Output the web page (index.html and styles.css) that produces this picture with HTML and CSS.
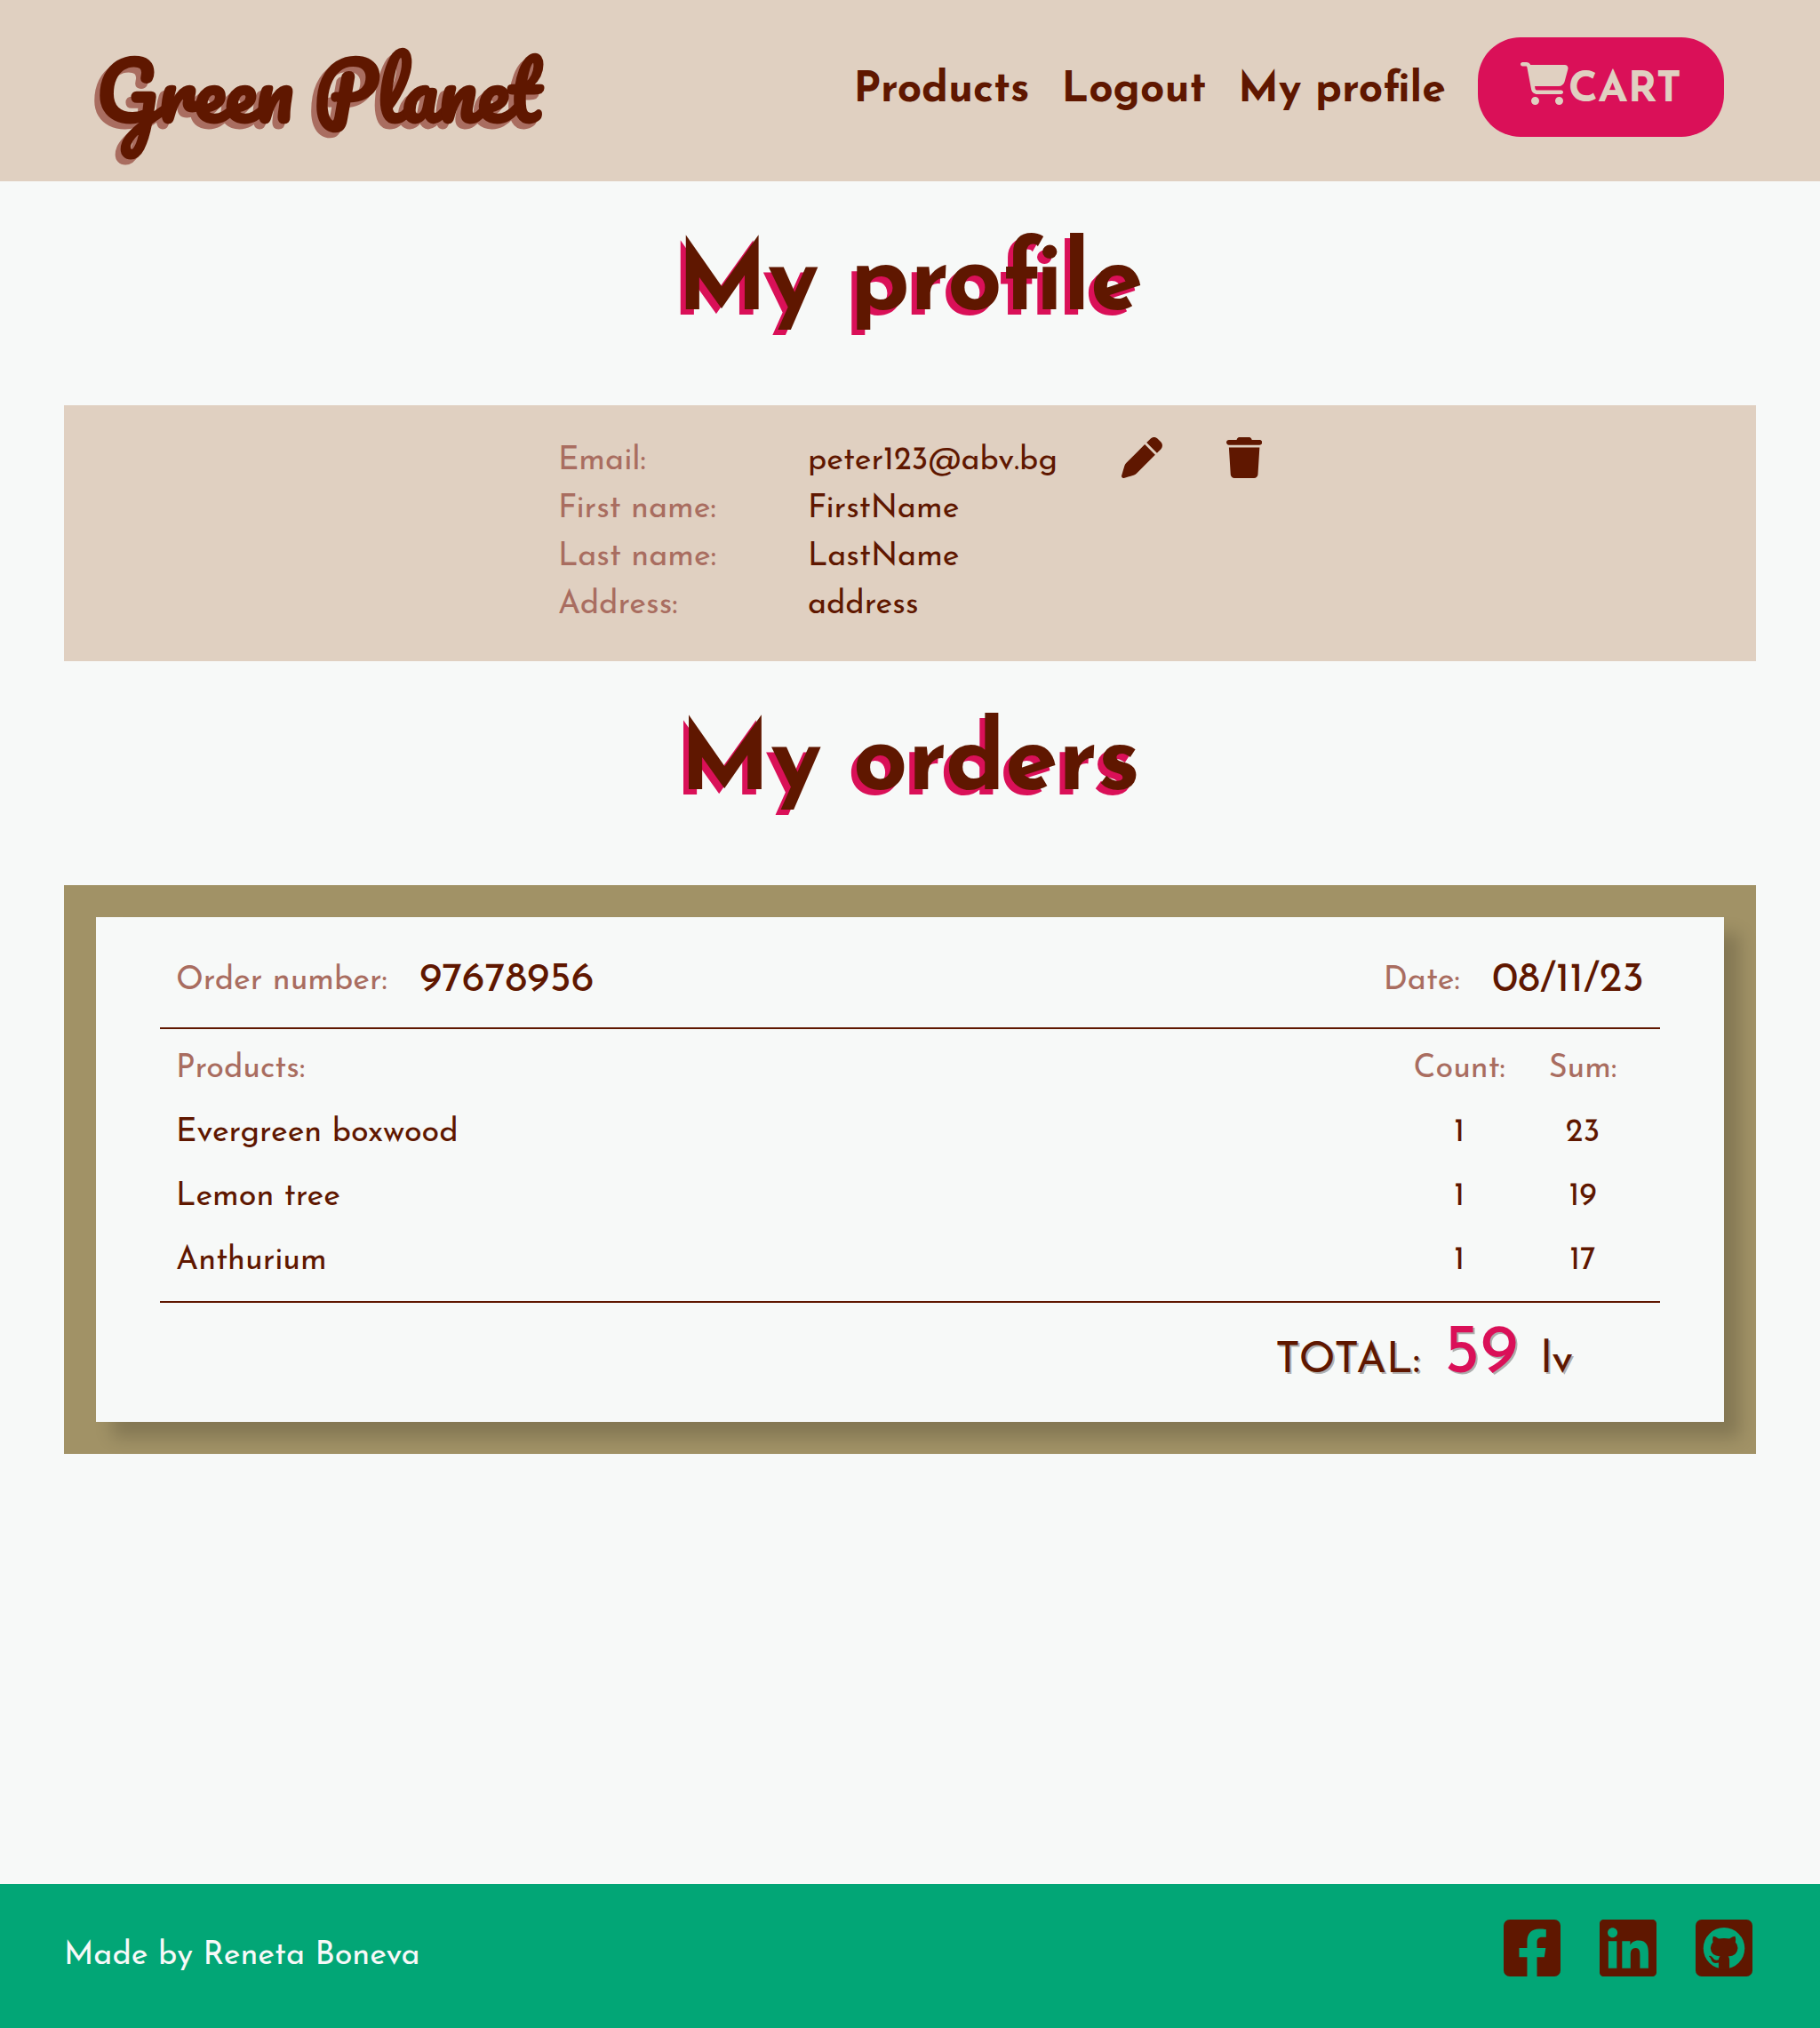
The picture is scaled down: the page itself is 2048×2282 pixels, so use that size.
FILE: index.html
```html
<!DOCTYPE html>
<html lang="en">
<head>
  <meta charset="utf-8">
  <meta name="viewport" content="width=device-width, initial-scale=1">
  <title>Green Planet</title>
  <link rel="stylesheet" href="styles.css">
</head>
<body>
  <header class="site-header">
    <a class="logo" href="#">Green Planet</a>
    <nav class="nav">
      <a class="nav-link" href="#">Products</a>
      <a class="nav-link" href="#">Logout</a>
      <a class="nav-link" href="#">My profile</a>
      <button class="cart" type="button">
        <svg class="cart-icon" viewBox="0 0 576 512" aria-hidden="true"><path d="M0 24C0 10.700 10.700 0 24 0H69.500c22 0 41.500 12.800 50.600 32h411c26.300 0 45.500 25 38.600 50.400l-41 152.300c-8.500 31.400-37 53.300-69.500 53.300H170.700l5.400 28.500c2.200 11.300 12.100 19.500 23.600 19.500H488c13.300 0 24 10.700 24 24s-10.700 24-24 24H199.700c-34.600 0-64.300-24.600-70.700-58.500L77.400 54.500c-.7-3.800-4-6.500-7.900-6.500H24C10.700 48 0 37.300 0 24zM128 464a48 48 0 1 1 96 0 48 48 0 1 1 -96 0zm336-48a48 48 0 1 1 0 96 48 48 0 1 1 0-96z"/></svg>
        <span class="cart-text">CART</span>
      </button>
    </nav>
  </header>

  <main class="main">
    <h1 class="title">My profile</h1>
    <section class="profile">
      <dl class="details">
        <dt>Email:</dt><dd>peter123@abv.bg</dd>
        <dt>First name:</dt><dd>FirstName</dd>
        <dt>Last name:</dt><dd>LastName</dd>
        <dt>Address:</dt><dd>address</dd>
      </dl>
      <div class="actions">
        <button class="icon-button" type="button" aria-label="Edit profile">
          <svg class="action-icon" viewBox="0 0 512 512" aria-hidden="true"><path d="M362.700 19.300L314.300 67.700 444.300 197.700l48.400-48.400c25-25 25-65.500 0-90.500L453.300 19.300c-25-25-65.500-25-90.500 0zm-71 71L58.600 323.500c-10.400 10.400-18 23.300-22.200 37.400L1 481.200C-1.500 489.700 .8 498.800 7 505s15.300 8.500 23.700 6.100l120.300-35.400c14.100-4.200 27-11.800 37.400-22.200L421.700 220.300 291.700 90.300z"/></svg>
        </button>
        <button class="icon-button" type="button" aria-label="Delete profile">
          <svg class="action-icon" viewBox="0 0 448 512" aria-hidden="true"><path d="M135.200 17.700L128 32H32C14.300 32 0 46.300 0 64S14.300 96 32 96H416c17.700 0 32-14.300 32-32s-14.300-32-32-32H320l-7.200-14.300C307.400 6.800 296.300 0 284.200 0H163.800c-12.100 0-23.200 6.800-28.600 17.700zM416 128H32L53.200 467c1.600 25.300 22.600 45 47.900 45H346.900c25.300 0 46.300-19.700 47.900-45L416 128z"/></svg>
        </button>
      </div>
    </section>

    <h2 class="title">My orders</h2>
    <section class="orders">
      <article class="order">
        <div class="order-head">
          <p class="field"><span class="label">Order number:</span><span class="value">97678956</span></p>
          <p class="field"><span class="label">Date:</span><span class="value">08/11/23</span></p>
        </div>
        <div class="order-body">
          <table class="products">
            <thead>
              <tr><th class="name" scope="col">Products:</th><th class="count" scope="col">Count:</th><th class="sum" scope="col">Sum:</th></tr>
            </thead>
            <tbody>
              <tr><td class="name">Evergreen boxwood</td><td>1</td><td>23</td></tr>
              <tr><td class="name">Lemon tree</td><td>1</td><td>19</td></tr>
              <tr><td class="name">Anthurium</td><td>1</td><td>17</td></tr>
            </tbody>
          </table>
        </div>
        <p class="total"><span>TOTAL:</span><strong class="amount">59</strong><span>lv</span></p>
      </article>
    </section>
  </main>

  <footer class="site-footer">
    <p class="credit">Made by Reneta Boneva</p>
    <div class="social">
      <a class="social-link" href="#" aria-label="Facebook">
        <svg class="social-icon" viewBox="0 32 448 448" aria-hidden="true"><path d="M400 32H48A48 48 0 0 0 0 80v352a48 48 0 0 0 48 48h137.250V327.690h-63V256h63v-54.640c0-62.150 37-96.480 93.670-96.480 27.140 0 55.520 4.840 55.520 4.840v61h-31.270c-30.810 0-40.420 19.120-40.420 38.730V256h68.780l-11 71.690h-57.780V480H400a48 48 0 0 0 48-48V80a48 48 0 0 0-48-48z"/></svg>
      </a>
      <a class="social-link" href="#" aria-label="LinkedIn">
        <svg class="social-icon" viewBox="0 32 448 448" aria-hidden="true"><path d="M416 32H31.900C14.300 32 0 46.500 0 64.300v383.400C0 465.500 14.300 480 31.900 480H416c17.600 0 32-14.500 32-32.300V64.300c0-17.800-14.400-32.300-32-32.300zM135.400 416H69V202.200h66.500V416zm-33.200-243c-21.300 0-38.500-17.300-38.500-38.500S80.900 96 102.200 96c21.200 0 38.500 17.300 38.500 38.500 0 21.300-17.200 38.500-38.500 38.500zm282.100 243h-66.400V312c0-24.800-.5-56.700-34.500-56.700-34.600 0-39.900 27-39.900 54.900V416h-66.400V202.200h63.700v29.200h.9c8.900-16.800 30.600-34.500 62.900-34.500 67.200 0 79.700 44.300 79.700 101.900V416z"/></svg>
      </a>
      <a class="social-link" href="#" aria-label="GitHub">
        <svg class="social-icon" viewBox="0 0 190 190" aria-hidden="true">
          <rect width="190" height="190" rx="20"/>
          <circle class="cutout" cx="95" cy="96" r="69"/>
          <path d="M59 56Q67 56 77 64Q95 60 113 64Q124 56 132 56Q136 66 133 76Q141 84 141 95Q139 122 109 123Q113 127 113 134V168H77V144C63 147 56 144 53 136Q50 127 44 122Q50 118 57 127Q63 139 77 134Q77 127 82 123Q51 121 50 95Q50 84 58 76Q55 65 59 56Z"/>
        </svg>
      </a>
    </div>
  </footer>
</body>
</html>
```
FILE: styles.css
```css
:root {
  --brown: #5f1700;
  --rose: #a96d60;
  --pink: #da1058;
  --sand: #e0d0c1;
  --paper: #f7f9f8;
  --olive: #a19266;
  --green: #02a676;
}

* {
  box-sizing: border-box;
}

body {
  margin: 0;
  min-height: 100vh;
  display: flex;
  flex-direction: column;
  background: var(--paper);
  color: var(--brown);
  font: 36px/54px "Josefin Sans", Lato, sans-serif;
}

p, dl, dd {
  margin: 0;
}

a {
  color: inherit;
  text-decoration: none;
}

button {
  border: 0;
  padding: 0;
  background: none;
  color: inherit;
  font: inherit;
  cursor: pointer;
}

svg {
  display: block;
  fill: currentColor;
}

.site-header {
  display: flex;
  align-items: center;
  justify-content: space-between;
  padding: 42px 108px 50px;
  background: var(--sand);
}

.logo {
  padding-top: 6px;
  font: 700 88px/106px Pacifico, Lato, cursive;
  text-shadow: -6px 6px 0 var(--rose);
  white-space: nowrap;
}

.nav {
  display: flex;
  align-items: center;
  gap: 36px;
  font-size: 48px;
  font-weight: 700;
  white-space: nowrap;
}

.nav-link,
.cart-text {
  padding-top: 8px;
}

.cart {
  display: flex;
  align-items: center;
  height: 112px;
  padding: 0 48px;
  border-radius: 48px;
  background: var(--pink);
  color: var(--sand);
}

.cart-icon {
  width: 54px;
  height: 48px;
  margin-bottom: 8px;
}

.main {
  flex: 1;
  padding: 0 72px;
}

.title {
  margin: 0;
  padding: 51px 0 69px;
  font-size: 108px;
  font-weight: 700;
  line-height: 132px;
  text-align: center;
  text-shadow: -6px 6px 0 var(--pink);
}

.profile {
  display: flex;
  justify-content: center;
  gap: 72px;
  padding: 36px 0;
  background: var(--sand);
}

.details {
  display: grid;
  grid-template-columns: 209px 281px;
  column-gap: 72px;
}

dt,
.label,
th {
  color: var(--rose);
  font-weight: 400;
}

.actions {
  display: flex;
  align-items: flex-start;
  gap: 72px;
}

.action-icon {
  height: 46px;
}

.orders {
  padding: 36px;
  background: var(--olive);
}

.order {
  padding: 42px 72px 32px;
  background: var(--paper);
  box-shadow: 18px 18px 18px rgba(0, 0, 0, 0.18);
}

.order-head {
  display: flex;
  justify-content: space-between;
  padding: 0 18px 22px;
  border-bottom: 2px solid var(--brown);
  line-height: 60px;
}

.field {
  display: flex;
  align-items: center;
  gap: 36px;
}

.value {
  font-size: 47px;
}

.order-body {
  padding: 9px 0;
  border-bottom: 2px solid var(--brown);
}

.products {
  width: 100%;
  border-collapse: collapse;
}

.products th,
.products td {
  height: 72px;
  padding: 0;
  text-align: center;
}

.products .name {
  padding-left: 18px;
  text-align: left;
}

.count {
  width: 102px;
}

.sum {
  width: 174px;
}

.total {
  display: flex;
  align-items: baseline;
  justify-content: flex-end;
  gap: 26px;
  padding: 23px 98px 0 0;
  font-size: 48px;
  line-height: 72px;
  text-shadow: 2px 2px 0 rgba(0, 0, 0, 0.3);
}

.amount {
  color: var(--pink);
  font-size: 79px;
  font-weight: 400;
}

.site-footer {
  display: flex;
  align-items: flex-start;
  justify-content: space-between;
  padding: 40px 76px 54px 72px;
  background: var(--green);
}

.credit {
  padding-top: 14px;
  color: var(--paper);
}

.social {
  display: flex;
  gap: 44px;
}

.social-icon {
  width: 64px;
  height: 64px;
}

.cutout {
  fill: var(--green);
}
```
